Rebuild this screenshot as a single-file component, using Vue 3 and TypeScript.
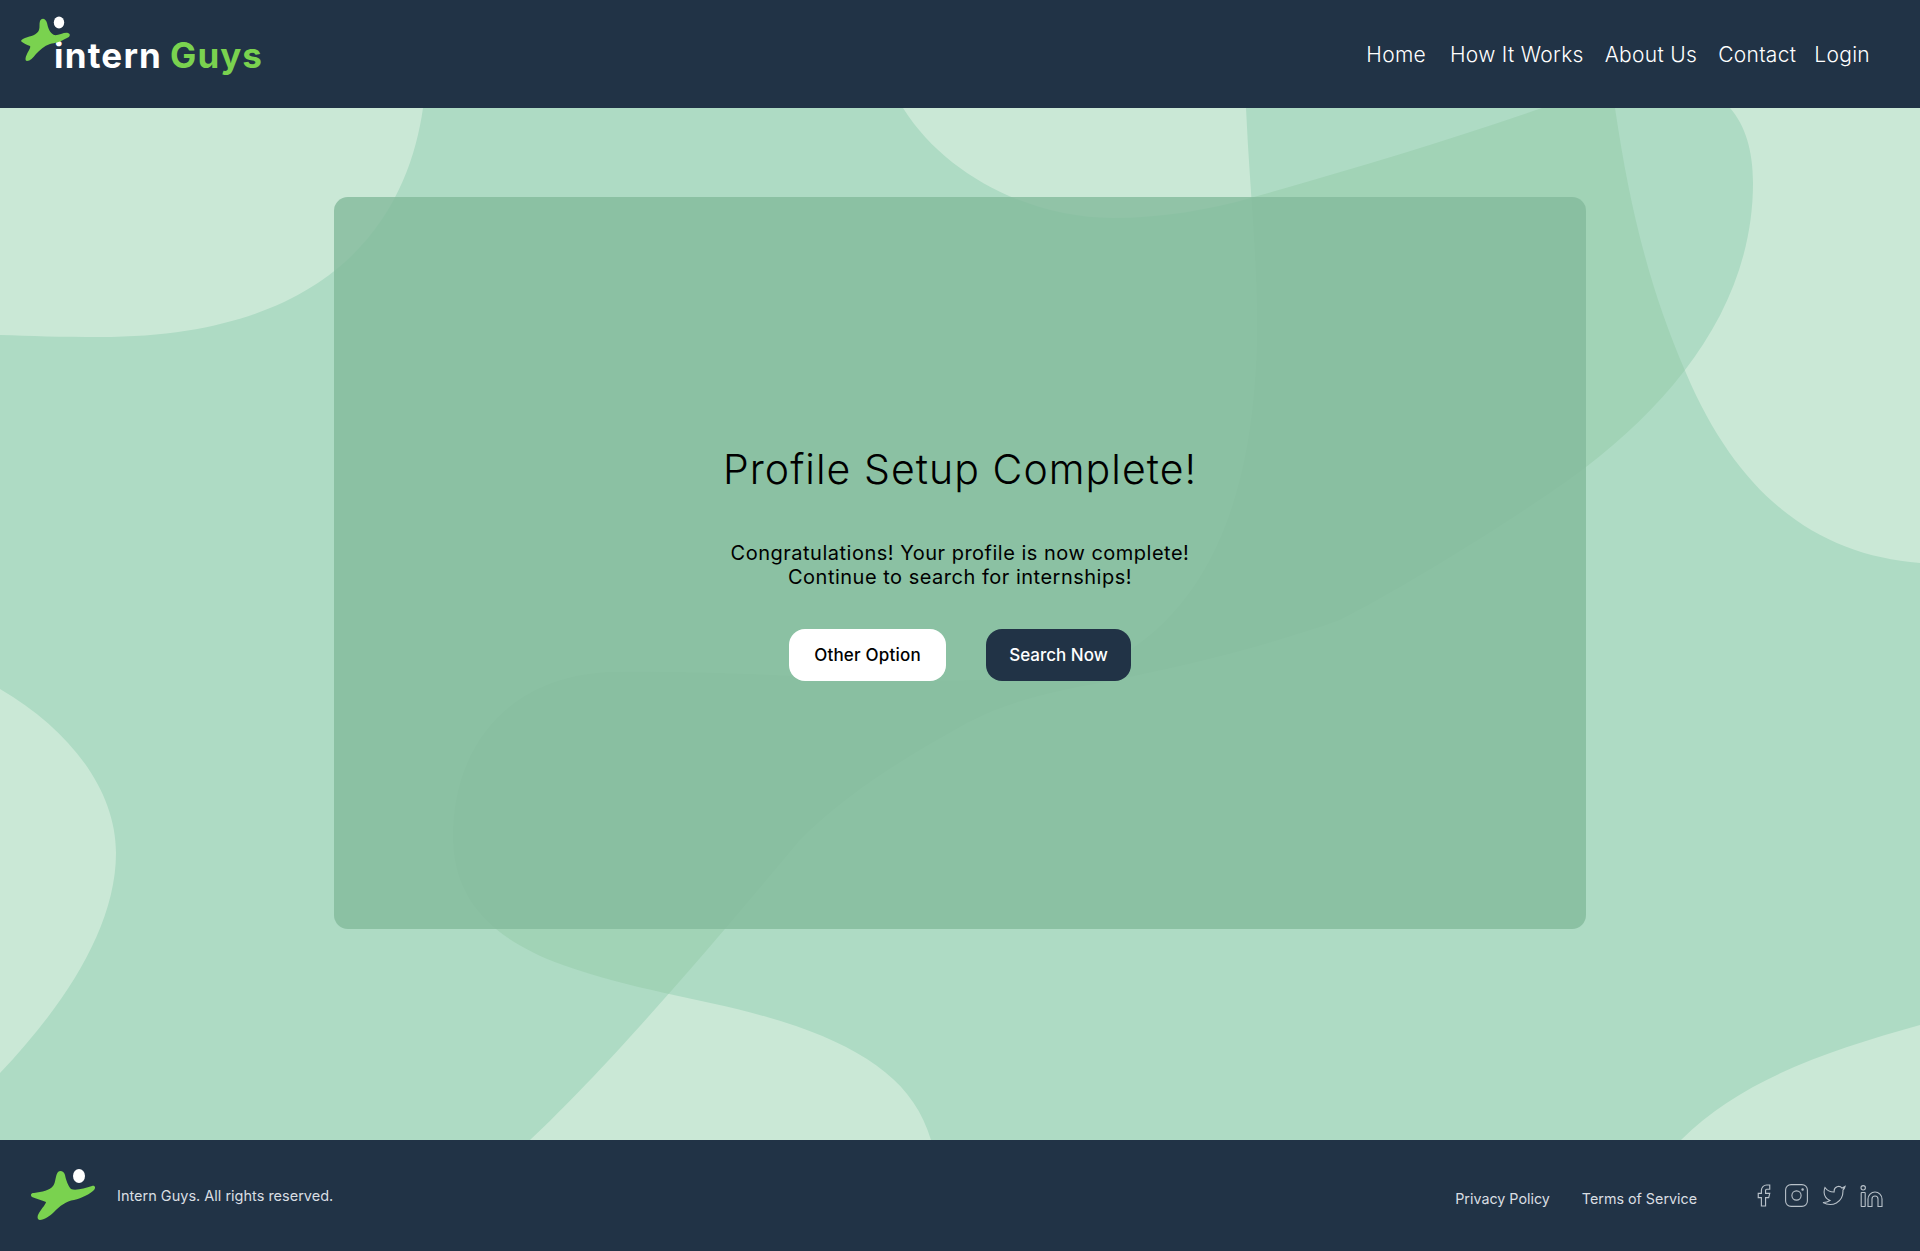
<template>
  <div class="page">
    <header class="topbar">
      <a class="logo">
        <svg class="logo-mark" width="80" height="70" viewBox="0 0 80 70">
          <path d="M40 21C42 17 46 19 47 23C48 28 50 33 54 35C58 36 64 32 68 33C71 34 70 37 67 38C60 42 55 43 50 44C44 46 40 50 36 54C33 58 30 61 27 61C25 61 25 58 27 54C29 50 31 47 30 46C26 45 24 43 22 42C20 41 22 39 25 38C31 36 37 35 39 30C40 27 39 24 40 21Z" fill="#7AD24F" />
          <ellipse cx="59" cy="22.5" rx="5.2" ry="6" fill="#fff" />
        </svg>
        <span class="logo-white">intern</span>
        <span class="logo-green">Guys</span>
      </a>
      <nav class="nav">
        <a v-for="item in navItems" :key="item" class="nav-link">{{ item }}</a>
      </nav>
    </header>

    <main class="main">
      <svg class="blobs" viewBox="0 108 1920 1032" preserveAspectRatio="none">
        <defs>
          <clipPath id="blob-clip"><path :d="blobX" /></clipPath>
        </defs>
        <path :d="blobX" fill="#AEDBC4" />
        <path :d="blobY" fill="#AEDBC4" />
        <path :d="blobY" fill="#A1D3B6" clip-path="url(#blob-clip)" />
      </svg>

      <section class="card">
        <h1 class="title">Profile Setup Complete!</h1>
        <p class="message">
          Congratulations! Your profile is now complete!<br />
          Continue to search for internships!
        </p>
        <div class="actions">
          <button class="btn btn-light">Other Option</button>
          <button class="btn btn-dark">Search Now</button>
        </div>
      </section>
    </main>

    <footer class="footer">
      <svg class="footer-mark" width="70" height="60" viewBox="28 36 70 60">
        <path d="M58 42C60 40 64 41 65 45C66 50 68 56 71 59C76 61 85 58 92 56C95 55 96 58 94 60C90 64 82 68 74 70C66 71 60 76 54 82C50 86 44 90 40 90C37 90 37 86 39 83C42 78 46 74 46 72C42 70 36 69 32 67C30 65 31 63 34 63C42 62 50 60 53 56C56 52 55 46 58 42Z" fill="#7AD24F" />
        <ellipse cx="79" cy="46" rx="6" ry="7" fill="#fff" />
      </svg>
      <span class="copyright">Intern Guys. All rights reserved.</span>
      <div class="footer-links">
        <a>Privacy Policy</a>
        <a>Terms of Service</a>
      </div>
      <div class="socials">
        <svg width="14" height="23" viewBox="6 1 13 22">
          <path d="M18 2h-3a5 5 0 0 0-5 5v3H7v4h3v8h4v-8h3l1-4h-4V7a1 1 0 0 1 1-1h3z" />
        </svg>
        <svg width="23" height="23" viewBox="0 0 23 23">
          <rect x="0.6" y="0.6" width="21.8" height="21.8" rx="5.5" />
          <circle cx="11.5" cy="11.5" r="4.6" />
          <circle cx="17.6" cy="5.4" r="0.7" />
        </svg>
        <svg width="24" height="21" viewBox="0 2 24 20">
          <path d="M23 3a10.9 10.9 0 0 1-3 1.53 4.48 4.48 0 0 0-7.86 3v1A10.66 10.66 0 0 1 3 4s-4 9 5 13a11.64 11.64 0 0 1-7 2c9 5 20 0 20-11.5a4.5 4.5 0 0 0-.08-.83A7.72 7.72 0 0 0 23 3z" />
        </svg>
        <svg width="23" height="22" viewBox="0 0 23 22">
          <circle cx="3.2" cy="2.8" r="2.2" />
          <rect x="1.2" y="7.5" width="4" height="14" rx="0.6" />
          <path d="M8 21.5V14a7 7 0 0 1 14 0v7.5h-4V14a3 3 0 0 0-6 0v7.5z" />
        </svg>
      </div>
    </footer>
  </div>
</template>

<script setup lang="ts">
const navItems = ['Home', 'How It Works', 'About Us', 'Contact', 'Login'];

// background shapes, page coordinates
const blobX =
  'M423 108C410 200 350 337 100 337C60 337 30 336 0 335L0 689C70 730 116 790 116 853C116 930 60 1010 0 1073L0 1140L530 1140' +
  'C600 1075 700 960 800 840C850 790 905 758 967 723C1010 700 1060 690 1100 683C1190 665 1270 645 1340 620C1400 590 1530 510 1586 467' +
  'C1680 395 1753 300 1753 183C1753 150 1745 125 1730 108L1542 108C1450 140 1350 170 1254 197C1210 210 1160 218 1113 218C1030 218 945 175 903 108Z';
const blobY =
  'M1246 108C1250 200 1262 300 1255 380C1248 480 1220 590 1130 650C1080 680 990 682 900 680C800 677 700 670 612 672' +
  'C510 675 453 745 453 836C453 890 480 935 563 965C640 993 720 1000 796 1026C870 1052 915 1085 931 1140L1681 1140' +
  'C1740 1080 1830 1050 1920 1025L1920 563C1820 555 1740 500 1686 373C1650 290 1630 210 1615 108Z';
</script>

<style>
html,
body {
  margin: 0;
}
</style>

<style scoped>
.page {
  width: 1920px;
  height: 1251px;
  display: flex;
  flex-direction: column;
  font-family: Inter, "Noto Sans", sans-serif;
  overflow: hidden;
}

.topbar {
  height: 108px;
  flex: none;
  background: #213346;
  display: flex;
  justify-content: space-between;
  align-items: flex-start;
  color: #fff;
}

.logo {
  position: relative;
  display: flex;
  gap: 8px;
  padding: 34px 0 0 54px;
  font-size: 35px;
  line-height: 42px;
  font-weight: 700;
  letter-spacing: 1.2px;
}

.logo-mark {
  position: absolute;
  left: 0;
  top: 0;
}

.logo-green {
  color: #7AD24F;
  letter-spacing: 1px;
}

.nav {
  display: flex;
  gap: 21px;
  padding: 43px 50px 0 0;
  font-size: 21px;
  line-height: 24px;
  font-weight: 300;
  letter-spacing: 0.3px;
}

.nav-link:first-child {
  margin-right: 3px;
}

.nav-link:last-child {
  margin-left: -3px;
}

.main {
  position: relative;
  flex: 1;
  background: #CAE8D6;
  display: flex;
  justify-content: center;
  align-items: flex-start;
  padding-top: 89px;
  box-sizing: border-box;
}

.blobs {
  position: absolute;
  inset: 0;
  width: 100%;
  height: 100%;
}

.card {
  position: relative;
  width: 1252px;
  height: 732px;
  box-sizing: border-box;
  padding-top: 248px;
  border-radius: 14px;
  background: rgba(132, 187, 156, 0.82);
  display: flex;
  flex-direction: column;
  align-items: center;
  color: #000;
}

.title {
  margin: 0;
  font-size: 41px;
  line-height: 48px;
  font-weight: 300;
  letter-spacing: 1.05px;
}

.message {
  margin: 48px 0 0;
  font-size: 20px;
  line-height: 24px;
  text-align: center;
  font-weight: 400;
  letter-spacing: 0.5px;
}

.actions {
  display: flex;
  gap: 40px;
  margin-top: 40px;
}

.btn {
  height: 52px;
  border: none;
  border-radius: 16px;
  font-family: inherit;
  font-size: 17px;
  font-weight: 500;
}

.btn-light {
  width: 157px;
  background: #fff;
  color: #000;
  letter-spacing: 0.2px;
}

.btn-dark {
  width: 145px;
  background: #213346;
  color: #fff;
}

.footer {
  height: 111px;
  flex: none;
  background: #213346;
  display: flex;
  align-items: center;
  padding: 0 37px 0 28px;
  box-sizing: border-box;
  color: #D9DEE2;
}

.footer-mark {
  margin-top: 1px;
}

.copyright {
  margin-left: 19px;
  font-size: 14.5px;
  line-height: 18px;
}

.footer-links {
  margin-left: auto;
  display: flex;
  gap: 32px;
  padding-top: 6px;
  font-size: 14.3px;
  line-height: 18px;
}

.socials {
  display: flex;
  align-items: center;
  gap: 14px;
  margin-left: 60px;
}

.socials svg {
  fill: none;
  stroke: #B8C1C9;
  stroke-width: 1.1;
}
</style>
